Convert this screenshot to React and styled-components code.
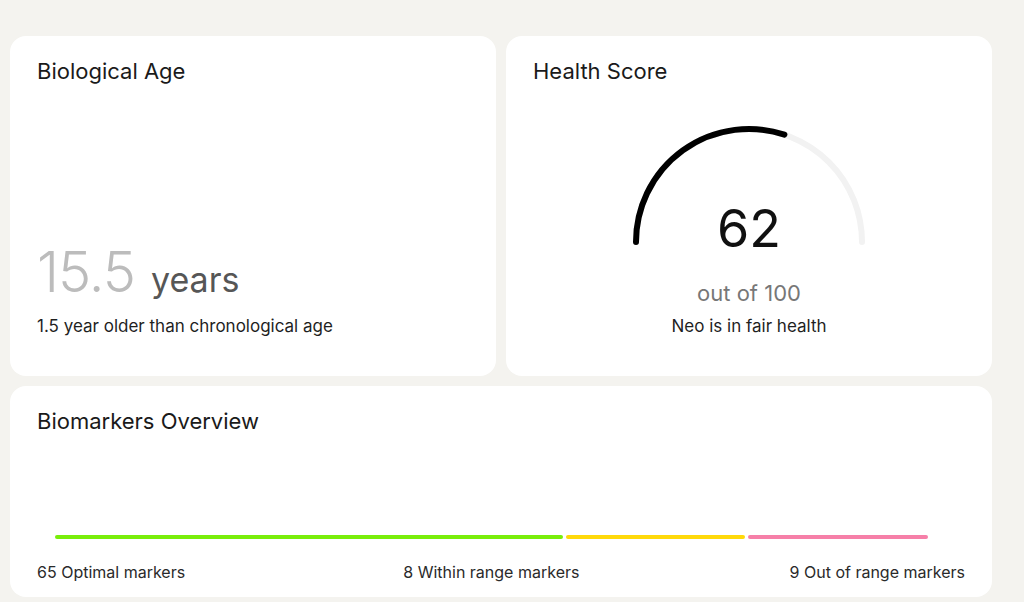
import { createGlobalStyle, styled } from "styled-components";

const GlobalStyle = createGlobalStyle`
  html, body {
    margin: 0;
    padding: 0;
    background: #f4f3ef;
    font-family: Inter, "Noto Sans", "Liberation Sans", sans-serif;
    color: #1c1c1c;
  }
`;

const segments = [
  { color: "#79ee0a", size: 507 },
  { color: "#ffd90a", size: 179 },
  { color: "#f67fa8", size: 180 },
];

const score = 62;

function Gauge({ value }) {
  const r = 113;
  const cx = 120;
  const cy = 119;
  // arc fill tops out a little under the real share, like the design
  const angle = Math.PI - (value / 100) * 0.97 * Math.PI;
  const ex = cx + r * Math.cos(angle);
  const ey = cy - r * Math.sin(angle);
  return (
    <S_gauge>
      <svg width="240" height="126" viewBox="0 0 240 126">
        <path
          d={`M ${cx - r} ${cy} A ${r} ${r} 0 0 1 ${cx + r} ${cy}`}
          fill="none"
          stroke="#f2f2f2"
          strokeWidth="6"
          strokeLinecap="round"
        />
        <path
          d={`M ${cx - r} ${cy} A ${r} ${r} 0 0 1 ${ex} ${ey}`}
          fill="none"
          stroke="#000"
          strokeWidth="6"
          strokeLinecap="round"
        />
      </svg>
      <S_gaugeValue>{value}</S_gaugeValue>
    </S_gauge>
  );
}

export default function App() {
  return (
    <>
      <GlobalStyle />
      <S_page>
        <S_topRow>
          <S_card>
            <S_title>Biological Age</S_title>
            <S_ageRow>
              <S_ageNumber>15.5</S_ageNumber>
              <S_ageUnit>years</S_ageUnit>
            </S_ageRow>
            <S_caption $gap={10}>1.5 year older than chronological age</S_caption>
          </S_card>
          <S_card>
            <S_title>Health Score</S_title>
            <S_scoreBody>
              <Gauge value={score} />
              <S_outOf>out of 100</S_outOf>
              <S_caption $gap={9}>Neo is in fair health</S_caption>
            </S_scoreBody>
          </S_card>
        </S_topRow>
        <S_wideCard>
          <S_title>Biomarkers Overview</S_title>
          <S_bar>
            {segments.map((s) => (
              <S_segment key={s.color} $color={s.color} $size={s.size} />
            ))}
          </S_bar>
          <S_legend>
            <S_legendItem>65 Optimal markers</S_legendItem>
            <S_legendItem $shift={8}>8 Within range markers</S_legendItem>
            <S_legendItem>9 Out of range markers</S_legendItem>
          </S_legend>
        </S_wideCard>
      </S_page>
    </>
  );
}

const S_page = styled.main`
  display: flex;
  flex-direction: column;
  gap: 10px;
  width: 982px;
  padding: 36px 0 0 10px;
`;

const S_topRow = styled.div`
  display: grid;
  grid-template-columns: 1fr 1fr;
  gap: 10px;
`;

const S_card = styled.section`
  display: flex;
  flex-direction: column;
  height: 340px;
  box-sizing: border-box;
  padding: 22px 27px 40px;
  background: #fff;
  border-radius: 16px;
`;

const S_wideCard = styled(S_card)`
  height: 211px;
  padding-bottom: 15px;
`;

const S_title = styled.h2`
  margin: 0;
  font-size: 22px;
  font-weight: 400;
  line-height: 27px;
  color: #1a1a1a;
`;

const S_ageRow = styled.div`
  display: flex;
  align-items: baseline;
  gap: 16px;
  margin-top: auto;
`;

const S_ageNumber = styled.span`
  font-size: 56px;
  font-weight: 300;
  line-height: 1.2;
  color: #bcbcbc;
  letter-spacing: -1px;
`;

const S_ageUnit = styled.span`
  font-size: 34px;
  font-weight: 400;
  color: #565656;
`;

const S_caption = styled.p`
  margin: ${(p) => p.$gap}px 0 0;
  font-size: 17px;
  line-height: 20px;
  color: #1f1f1f;
`;

const S_scoreBody = styled.div`
  display: flex;
  flex-direction: column;
  align-items: center;
  margin-top: 38px;
`;

const S_gauge = styled.div`
  position: relative;
  width: 240px;
  height: 126px;
  svg {
    display: block;
  }
`;

const S_gaugeValue = styled.span`
  position: absolute;
  left: 0;
  right: 0;
  top: 80px;
  text-align: center;
  font-size: 52px;
  line-height: 1;
  font-weight: 400;
  color: #111;
`;

const S_outOf = styled.span`
  margin-top: 31px;
  font-size: 22px;
  line-height: 27px;
  color: #777;
`;

const S_bar = styled.div`
  display: flex;
  gap: 3px;
  margin: auto 37px 24px 18px;
`;

const S_segment = styled.div`
  flex: ${(p) => p.$size} 1 0;
  height: 4px;
  border-radius: 2px;
  background: ${(p) => p.$color};
`;

const S_legend = styled.div`
  display: flex;
  justify-content: space-between;
`;

const S_legendItem = styled.span`
  margin-left: ${(p) => p.$shift || 0}px;
  font-size: 16px;
  line-height: 19px;
  color: #2a2a2a;
`;
